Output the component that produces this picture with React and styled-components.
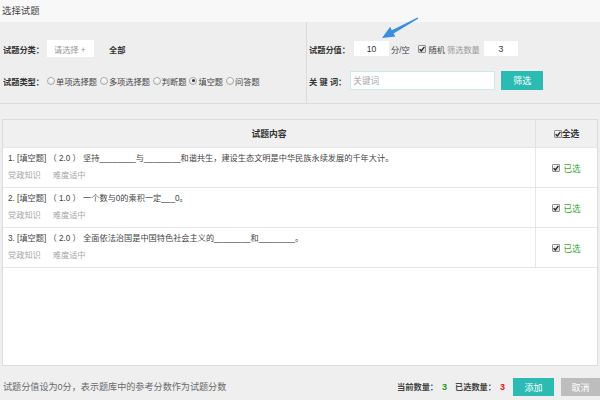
import React from 'react';
import styled, { createGlobalStyle } from 'styled-components';

const GlobalStyle = createGlobalStyle`
  *, *::before, *::after { box-sizing: border-box; }
  html, body { margin: 0; padding: 0; }
  body {
    background: #efefef;
    font-family: "Liberation Sans", "Noto Sans CJK SC", sans-serif;
    font-size: 8.2px;
    color: #333;
    overflow: hidden;
  }
`;

const Page = styled.div`
  position: relative;
  width: 600px;
  height: 400px;
  display: flex;
  flex-direction: column;
  background: #efefef;
  overflow: hidden;
`;

const TitleBar = styled.div`
  height: 22px;
  line-height: 21px;
  padding-left: 2px;
  background: #f8f8f8;
  font-size: 9.4px;
  color: #444;
`;

const FilterPanel = styled.div`
  height: 82px;
  display: grid;
  grid-template-columns: 307px 1fr;
  background: #eeeeee;
  border-bottom: 1px solid #dcdcdc;
`;

const FilterCol = styled.div`
  display: flex;
  flex-direction: column;
  gap: 13px;
  padding: 17px 0 0 ${p => p.$pad}px;
  border-right: ${p => (p.$divider ? '1px solid #dcdcdc' : 'none')};
`;

const Row = styled.div`
  display: flex;
  align-items: center;
  height: 19px;
  white-space: nowrap;
`;

const Label = styled.span`
  font-weight: bold;
  color: #333;
`;

const SelectBox = styled.span`
  display: inline-flex;
  align-items: center;
  width: 47px;
  height: 17px;
  margin-left: 3px;
  padding-left: 7px;
  background: #fff;
  color: #999;
`;

const AllText = styled.span`
  margin-left: 15px;
  font-weight: bold;
`;

const RadioItem = styled.label`
  display: inline-flex;
  align-items: center;
  margin-left: 3px;
  color: #444;
`;

const RadioDot = styled.span`
  position: relative;
  width: 8px;
  height: 8px;
  margin-right: 1px;
  border-radius: 50%;
  border: 1px solid #a9a9a9;
  background: linear-gradient(#ffffff, #e6e6e6);
  &::after {
    content: '';
    display: ${p => (p.$on ? 'block' : 'none')};
    position: absolute;
    left: 1.5px;
    top: 1.5px;
    width: 3px;
    height: 3px;
    border-radius: 50%;
    background: #333;
  }
`;

const BoxInput = styled.input`
  width: ${p => p.$w}px;
  height: ${p => p.$h}px;
  margin-left: ${p => p.$ml}px;
  padding: 0 2px;
  border: ${p => (p.$bordered ? '1px solid #c6ecea' : 'none')};
  background: #fff;
  font-family: inherit;
  font-size: 8.6px;
  color: #333;
  text-align: ${p => p.$align || 'center'};
  outline: none;
  &::placeholder { color: #aaa; }
`;

const Plain = styled.span`
  margin-left: ${p => p.$ml || 0}px;
  color: ${p => p.$color || '#444'};
`;

const CheckBox = styled.span`
  display: inline-flex;
  align-items: center;
  justify-content: center;
  width: 8px;
  height: 8px;
  margin-left: ${p => p.$ml || 0}px;
  border: 1px solid #8e8e8e;
  border-radius: 1px;
  background: linear-gradient(#fafafa, #d8d8d8);
  flex: none;
`;

const TealButton = styled.button`
  width: ${p => p.$w}px;
  height: ${p => p.$h}px;
  margin-left: ${p => p.$ml}px;
  padding: 0;
  border: none;
  background: ${p => (p.$muted ? '#bdbdbd' : '#2bbbb3')};
  color: #fff;
  font-family: inherit;
  font-size: 9px;
  cursor: pointer;
`;

const Table = styled.div`
  margin: 15px 2px 0;
  height: 247px;
  display: flex;
  flex-direction: column;
  background: #fff;
  border: 1px solid #dcdcdc;
`;

const TableRow = styled.div`
  display: grid;
  grid-template-columns: 533px 1fr;
  height: ${p => p.$h}px;
  background: ${p => p.$bg || '#fff'};
  border-bottom: 1px solid #e6e6e6;
`;

const HeadCell = styled.div`
  display: flex;
  align-items: center;
  justify-content: center;
  font-weight: bold;
  font-size: 8.8px;
  color: #333;
  border-right: ${p => (p.$divider ? '1px solid #e0e0e0' : 'none')};
`;

const QuestionCell = styled.div`
  padding: 5px 5px 0;
  border-right: 1px solid #e6e6e6;
  white-space: nowrap;
`;

const QuestionText = styled.div`
  line-height: 12px;
  color: #444;
`;

const Meta = styled.div`
  display: flex;
  gap: 12px;
  margin-top: 5px;
  line-height: 12px;
  color: #a5a5a5;
`;

const PickCell = styled.div`
  display: flex;
  align-items: center;
  justify-content: center;
`;

const Picked = styled.span`
  margin-left: 3px;
  color: #3aa63a;
  font-size: 8.6px;
`;

const Footer = styled.div`
  flex: 1;
  display: flex;
  align-items: flex-start;
  padding: 12px 0 0 3px;
  white-space: nowrap;
`;

const Note = styled.span`
  margin-right: auto;
  line-height: 18px;
  font-size: 9.1px;
  color: #6a6a6a;
`;

const Counter = styled.span`
  margin-left: ${p => p.$ml || 0}px;
  line-height: 18px;
  font-weight: bold;
  color: #444;
`;

const Num = styled.span`
  margin-left: 4px;
  font-weight: bold;
  font-size: 9px;
  color: ${p => p.$color};
`;

const Arrow = styled.svg`
  position: absolute;
  left: 378px;
  top: 14px;
  pointer-events: none;
`;

const Tick = () => (
  <svg width="6" height="6" viewBox="0 0 6 6">
    <path d="M0.6 3.1 L2.3 4.9 L5.4 0.8" fill="none" stroke="#222" strokeWidth="1.3" />
  </svg>
);

const Check = ({ ml }) => (
  <CheckBox $ml={ml}>
    <Tick />
  </CheckBox>
);

const types = [
  { name: '单项选择题', on: false },
  { name: '多项选择题', on: false },
  { name: '判断题', on: false },
  { name: '填空题', on: true },
  { name: '问答题', on: false },
];

const questions = [
  '1. [填空题] （ 2.0 ） 坚持________与________和谐共生，建设生态文明是中华民族永续发展的千年大计。',
  '2. [填空题] （ 1.0 ） 一个数与0的乘积一定___0。',
  '3. [填空题] （ 2.0 ） 全面依法治国是中国特色社会主义的________和________。',
];

export default function App() {
  return (
    <>
      <GlobalStyle />
      <Page>
        <TitleBar>选择试题</TitleBar>
        <FilterPanel>
          <FilterCol $pad={3} $divider>
            <Row>
              <Label>试题分类：</Label>
              <SelectBox>请选择 +</SelectBox>
              <AllText>全部</AllText>
            </Row>
            <Row>
              <Label>试题类型：</Label>
              {types.map(t => (
                <RadioItem key={t.name}>
                  <RadioDot $on={t.on} />
                  {t.name}
                </RadioItem>
              ))}
            </Row>
          </FilterCol>
          <FilterCol $pad={2}>
            <Row>
              <Label>试题分值：</Label>
              <BoxInput $w={35} $h={15} $ml={4} defaultValue="10" readOnly />
              <Plain $ml={2}>分/空</Plain>
              <Check ml={8} />
              <Plain $ml={3}>随机</Plain>
              <Plain $ml={2} $color="#9a9a9a">筛选数量</Plain>
              <BoxInput $w={34} $h={15} $ml={4} defaultValue="3" readOnly />
            </Row>
            <Row>
              <Label>关 键 词：</Label>
              <BoxInput $w={145} $h={19} $ml={4} $bordered $align="left" placeholder="关键词" />
              <TealButton $w={42} $h={19} $ml={6}>筛选</TealButton>
            </Row>
          </FilterCol>
        </FilterPanel>

        <Table>
          <TableRow $h={28} $bg="#f0f0f0">
            <HeadCell $divider>试题内容</HeadCell>
            <HeadCell>
              <Check />
              全选
            </HeadCell>
          </TableRow>
          {questions.map(q => (
            <TableRow key={q} $h={40}>
              <QuestionCell>
                <QuestionText>{q}</QuestionText>
                <Meta>
                  <span>党政知识</span>
                  <span>难度适中</span>
                </Meta>
              </QuestionCell>
              <PickCell>
                <Check />
                <Picked>已选</Picked>
              </PickCell>
            </TableRow>
          ))}
        </Table>

        <Footer>
          <Note>试题分值设为0分，表示题库中的参考分数作为试题分数</Note>
          <Counter>
            当前数量：<Num $color="#1e9a1e">3</Num>
          </Counter>
          <Counter $ml={8}>
            已选数量：<Num $color="#ee1111">3</Num>
          </Counter>
          <TealButton $w={41} $h={18} $ml={8}>添加</TealButton>
          <TealButton $w={39} $h={18} $ml={7} $muted>取消</TealButton>
        </Footer>

        <Arrow width="44" height="28" viewBox="0 0 44 28">
          <polygon
            points="4,24 17.4,22.6 15.6,19.5 40.4,4.6 39.6,3.4 13.8,16.3 12.2,12.8"
            fill="#3a8ee0"
          />
        </Arrow>
      </Page>
    </>
  );
}
